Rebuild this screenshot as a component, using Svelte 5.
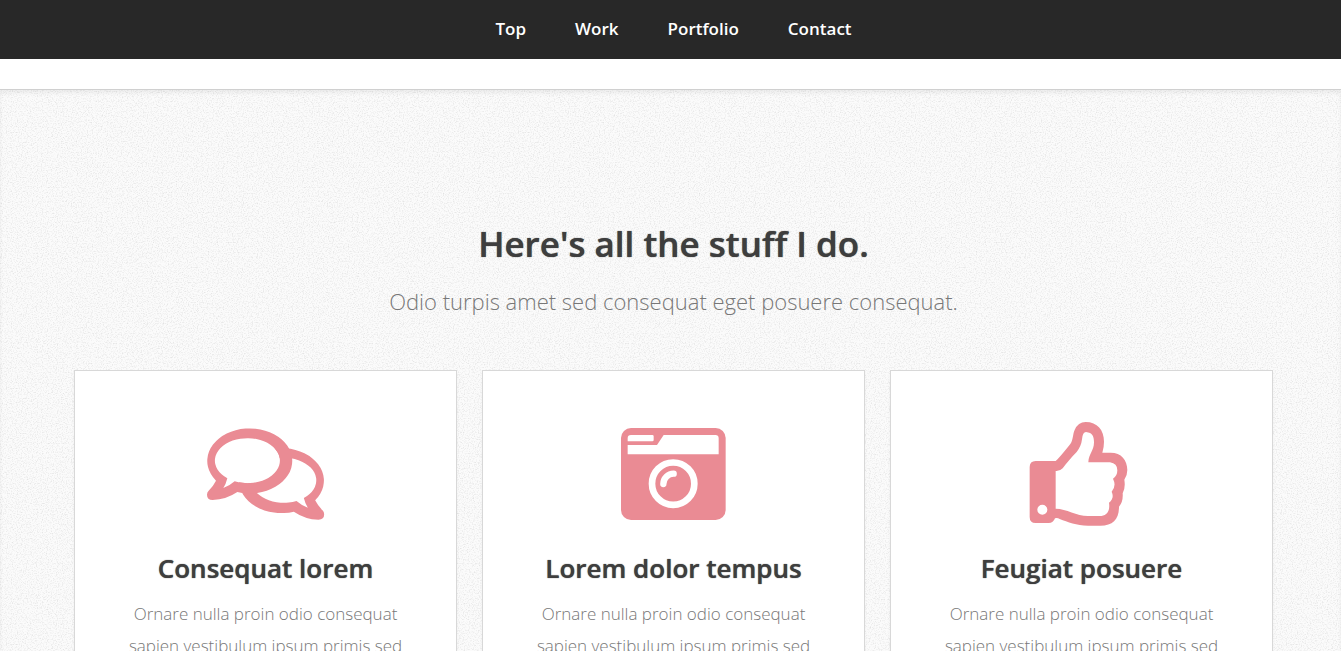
<script>
  const links = ['Top', 'Work', 'Portfolio', 'Contact'];
  const cards = [
    { icon: 'comments', title: 'Consequat lorem' },
    { icon: 'camera', title: 'Lorem dolor tempus' },
    { icon: 'thumb', title: 'Feugiat posuere' }
  ];
  const bubble =
    'M78 212A127.5 97.5 0 1 1 142 246Q108 269 68 270Q51 270 51 254Q51 247 56 242Q70 228 78 212Z';
  const bubbleHole = 'M112 205A97.5 67.5 0 1 1 134 214Q118 228 100 234Q108 222 112 205Z';
</script>

<nav>
  <ul>
    {#each links as link}
      <li><a href="#{link.toLowerCase()}">{link}</a></li>
    {/each}
  </ul>
</nav>

<div class="intro" id="top"></div>

<main id="work">
  <div class="container">
    <header>
      <h2>Here's all the stuff I do.</h2>
      <p>Odio turpis amet sed consequat eget posuere consequat.</p>
    </header>
    <div class="cards">
      {#each cards as card}
        <section>
          {#if card.icon === 'comments'}
            <svg viewBox="3 0 450 375" aria-hidden="true">
              <path transform="translate(453.5 59) scale(-1 1)" fill-rule="evenodd" d={bubble + bubbleHole} />
              <path class="cut" d={bubbleHole} />
              <path fill-rule="evenodd" d={bubble + bubbleHole} />
            </svg>
          {:else if card.icon === 'camera'}
            <svg viewBox="-2 0 450 375" aria-hidden="true">
              <rect x="64" y="54" width="314" height="276" rx="30" />
              <path class="cut" d="M94 75H158Q162 75 162 79V90Q162 94 158 94H84V85Q84 75 94 75ZM84 105H172L192 75H347Q357 75 357 85V133H84Z" />
              <circle class="line" cx="220.500" cy="221" r="63.500" stroke-width="20" />
              <path class="line" stroke-width="19" stroke-linecap="round" d="M191 222A31 31 0 0 1 222 191" />
            </svg>
          {:else}
            <svg viewBox="7 0 450 375" aria-hidden="true">
              <path
                fill-rule="evenodd"
                d="M93 153H153Q163 145 197 102C206 90 204 72 210 60Q220 36 243 36C278 36 298 60 298 95Q298 112 293 128H318C350 128 368 150 368 180Q368 196 359 209Q363 234 354 250Q356 275 343 290C343 328 325 347 287 347H250C215 347 190 336 165 327Q158 323 151 325Q146 339 132 339H93Q75 339 75 321V171Q75 153 93 153ZM153 183Q166 184 174 175C186 160 200 141 216 126Q230 108 232 88Q234 66 244 66C264 68 268 80 268 97C268 122 252 132 251 157H316Q338 160 338 181Q338 198 325 206Q336 228 321 245Q330 265 313 278C317 305 305 318 285 318H250C215 318 186 296 153 296ZM128 299A15 15 0 1 0 98 299A15 15 0 1 0 128 299Z"
              />
            </svg>
          {/if}
          <h3>{card.title}</h3>
          <p>Ornare nulla proin odio consequat sapien vestibulum ipsum primis sed amet consequat lorem dolore.</p>
        </section>
      {/each}
    </div>
  </div>
</main>

<style>
  :global(body) {
    margin: 0;
    background: #fff;
    color: #777;
    font-family: 'Open Sans', 'Noto Sans', sans-serif;
    font-size: 17px;
    font-weight: 300;
    line-height: 32px;
    overflow: hidden;
  }
  nav {
    background: #282828;
    padding-left: 6px;
  }
  ul {
    display: flex;
    justify-content: center;
    gap: 49px;
    list-style: none;
    margin: 0;
    padding: 13px 0 14px;
  }
  a {
    color: #fff;
    font-weight: 600;
    text-decoration: none;
  }
  .intro {
    height: 30px;
  }
  main {
    padding: 127px 68px 96px 74px;
    text-align: center;
    border-top: 1px solid #d0d0d0;
    box-shadow: inset 0 3px 4px rgba(0, 0, 0, 0.06);
    background-color: #fbfbfb;
    background-image: url("data:image/svg+xml,%3Csvg xmlns='http://www.w3.org/2000/svg' width='256' height='256'%3E%3Cfilter id='n' x='0' y='0' width='100%25' height='100%25'%3E%3CfeTurbulence type='fractalNoise' baseFrequency='.8' numOctaves='2' stitchTiles='stitch'/%3E%3CfeColorMatrix values='0 0 0 0 0 0 0 0 0 0 0 0 0 0 0 .22 0 0 0 -.1'/%3E%3C/filter%3E%3Crect width='256' height='256' filter='url(%23n)'/%3E%3C/svg%3E");
  }
  .container {
    max-width: 1199px;
    margin: 0 auto;
  }
  h2,
  h3 {
    margin: 0;
    color: #3e3e3e;
    font-weight: 600;
    text-shadow: 0 0 1px #3e3e3e;
  }
  h2 {
    font-size: 35px;
    line-height: 54px;
  }
  header p {
    margin: 10px 0 49px;
    font-size: 22px;
    line-height: 40px;
  }
  .cards {
    display: grid;
    grid-template-columns: repeat(3, 1fr);
    gap: 25px;
  }
  section {
    padding: 39px 48px 48px;
    background: #fff;
    border: 1px solid #d8d8d8;
    box-shadow: 0 2px 3px rgba(0, 0, 0, 0.05);
  }
  svg {
    display: block;
    width: 150px;
    height: 125px;
    margin: 0 auto;
    fill: #ea8b94;
  }
  .cut {
    fill: #fff;
  }
  .line {
    fill: none;
    stroke: #fff;
  }
  h3 {
    margin-top: 13px;
    font-size: 26px;
    line-height: 40px;
  }
  section p {
    margin: 10px 0 0;
  }
</style>
